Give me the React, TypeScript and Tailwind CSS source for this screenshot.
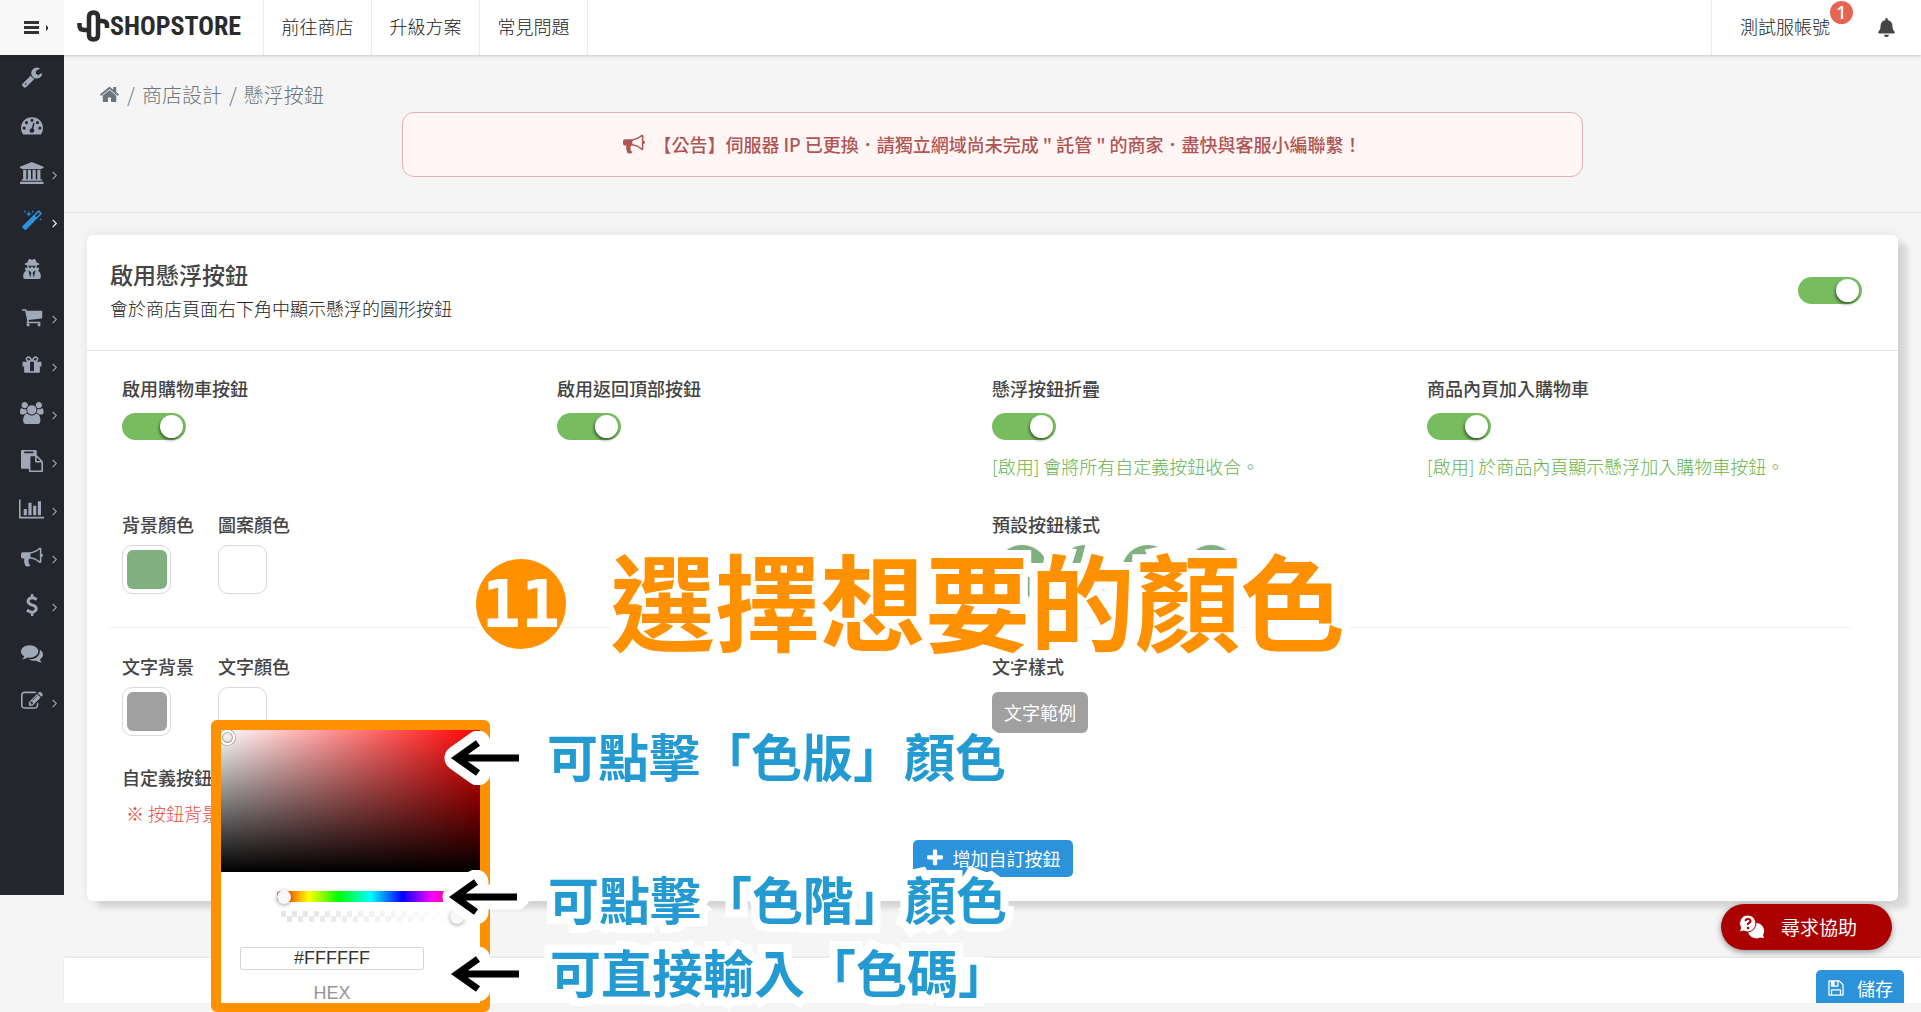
import type { CSSProperties, ReactNode } from "react";
import { FaBell, FaUserSecret } from "react-icons/fa";

/* ---------- icons ---------- */

type Glyph = { d: string; box?: string };

const glyphs: Record<string, Glyph> = {
  home: {
    d: "M1472 992v480q0 26-19 45t-45 19h-384v-384h-256v384h-384q-26 0-45-19t-19-45v-480q0-1 .5-3t.5-3l575-474 575 474q1 2 1 6zm223-69l-62 74q-8 9-21 11h-3q-13 0-21-7l-692-577-692 577q-12 8-24 7-13-2-21-11l-62-74q-8-10-7-23.5t11-21.5l719-599q32-26 76-26t76 26l244 204v-195q0-14 9-23t23-9h192q14 0 23 9t9 23v408l219 182q10 8 11 21.5t-7 23.5z",
  },
  wrench: {
    d: "M448 1472q0-26-19-45t-45-19-45 19-19 45 19 45 45 19 45-19 19-45zm644-420l-682 682q-37 37-90 37-52 0-91-37l-106-108q-38-36-38-90 0-53 38-91l681-681q39 98 114.5 173.5t173.5 114.5zm634-435q0 39-23 106-47 134-164.5 217.5t-258.5 83.5q-185 0-316.5-131.5t-131.5-316.5 131.5-316.5 316.5-131.5q58 0 121.5 16.5t107.5 46.5q16 11 16 28t-16 28l-293 169v224l193 107q5-3 79-48.5t135.5-81 70.5-35.5q15 0 23.5 10t8.5 25z",
  },
  gauge: {
    d: "M384 1152q0-53-37.5-90.5t-90.5-37.5-90.5 37.5-37.5 90.5 37.5 90.5 90.5 37.5 90.5-37.5 37.5-90.5zm192-448q0-53-37.5-90.5t-90.5-37.5-90.5 37.5-37.5 90.5 37.5 90.5 90.5 37.5 90.5-37.5 37.5-90.5zm428 481l101-382q6-26-7.5-48.5t-38.5-29.5-48 6.5-30 39.5l-101 382q-60 5-107 43.5t-63 98.5q-20 77 20 146t117 89 146-20 89-117q16-60-6-117t-72-91zm660-33q0-53-37.5-90.5t-90.5-37.5-90.5 37.5-37.5 90.5 37.5 90.5 90.5 37.5 90.5-37.5 37.5-90.5zm-640-640q0-53-37.5-90.5t-90.5-37.5-90.5 37.5-37.5 90.5 37.5 90.5 90.5 37.5 90.5-37.5 37.5-90.5zm448 192q0-53-37.5-90.5t-90.5-37.5-90.5 37.5-37.5 90.5 37.5 90.5 90.5 37.5 90.5-37.5 37.5-90.5zm320 448q0 261-141 483-19 29-54 29h-1402q-35 0-54-29-141-221-141-483 0-182 71-348t191-286 286-191 348-71 348 71 286 191 191 286 71 348z",
  },
  bank: {
    box: "0 0 1920 1792",
    d: "M960 0l960 384v128h-128q0 26-20.5 45t-48.5 19h-1526q-28 0-48.5-19t-20.5-45h-128v-128zm-704 640h256v768h128v-768h256v768h128v-768h256v768h128v-768h256v768h59q28 0 48.5 19t20.5 45v64h-1664v-64q0-26 20.5-45t48.5-19h59v-768zm1595 960q28 0 48.5 19t20.5 45v128h-1920v-128q0-26 20.5-45t48.5-19h1782z",
  },
  magic: {
    d: "M1254 581l293-293-107-107-293 293zm447-293q0 27-18 45l-1286 1286q-18 18-45 18t-45-18l-198-198q-18-18-18-45t18-45l1286-1286q18-18 45-18t45 18l198 198q18 18 18 45zm-1351-190l98 30-98 30-30 98-30-98-98-30 98-30 30-98zm350 162l196 60-196 60-60 196-60-196-196-60 196-60 60-196zm930 478l98 30-98 30-30 98-30-98-98-30 98-30 30-98zm-640-640l98 30-98 30-30 98-30-98-98-30 98-30 30-98z",
  },
  cart: {
    d: "M704 1536q0 52-38 90t-90 38-90-38-38-90 38-90 90-38 90 38 38 90zm896 0q0 52-38 90t-90 38-90-38-38-90 38-90 90-38 90 38 38 90zm128-1088v512q0 24-16.5 42.5t-40.5 21.5l-1044 122q13 60 13 70 0 16-24 64h920q26 0 45 19t19 45-19 45-45 19h-1024q-26 0-45-19t-19-45q0-11 8-31.5t16-36 21.5-40 15.5-29.5l-177-823h-204q-26 0-45-19t-19-45 19-45 45-19h256q16 0 28.5 6.5t19.5 15.5 13 24.5 8 26 5.5 29.5 4.5 26h1201q26 0 45 19t19 45z",
  },
  gift: {
    d: "M1056 1356v-716h-320v716q0 25 18 38.5t46 13.5h192q28 0 46-13.5t18-38.5zm-456-844h195l-126-161q-26-31-69-31-40 0-68 28t-28 68 28 68 68 28zm688-96q0-40-28-68t-68-28q-43 0-69 31l-125 161h194q40 0 68-28t28-68zm376 256v320q0 14-9 23t-23 9h-96v416q0 40-28 68t-68 28h-1088q-40 0-68-28t-28-68v-416h-96q-14 0-23-9t-9-23v-320q0-14 9-23t23-9h440q-93 0-158.5-65.5t-65.5-158.5 65.5-158.5 158.5-65.5q107 0 168 77l128 165 128-165q61-77 168-77 93 0 158.5 65.5t65.5 158.5-65.5 158.5-158.5 65.5h440q14 0 23 9t9 23z",
  },
  users: {
    box: "-64 0 1920 1792",
    d: "M529 896q-162 5-265 128h-134q-82 0-138-40.5t-56-118.5q0-353 124-353 6 0 43.5 21t97.5 42.5 119 21.5q67 0 133-23-5 37-5 66 0 139 81 256zm1071 637q0 120-73 189.5t-194 69.5h-874q-121 0-194-69.5t-73-189.5q0-53 3.5-103.5t14-109 26.5-108.5 43-97.5 62-81 85.5-53.5 111.5-20q10 0 43 21.5t73 48 107 48 135 21.5 135-21.5 107-48 73-48 43-21.5q61 0 111.5 20t85.5 53.5 62 81 43 97.5 26.5 108.5 14 109 3.5 103.5zm-1024-1277q0 106-75 181t-181 75-181-75-75-181 75-181 181-75 181 75 75 181zm704 384q0 159-112.5 271.5t-271.5 112.5-271.5-112.5-112.5-271.5 112.5-271.5 271.5-112.5 271.5 112.5 112.5 271.5zm576 225q0 78-56 118.5t-138 40.5h-134q-103-123-265-128 81-117 81-256 0-29-5-66 66 23 133 23 59 0 119-21.5t97.5-42.5 43.5-21q124 0 124 353zm-128-609q0 106-75 181t-181 75-181-75-75-181 75-181 181-75 181 75 75 181z",
  },
  paste: {
    d: "M768 1664h896v-640h-416q-40 0-68-28t-28-68v-416h-384v1152zm256-1440v-64q0-13-9.5-22.5t-22.5-9.5h-704q-13 0-22.5 9.5t-9.5 22.5v64q0 13 9.5 22.5t22.5 9.5h704q13 0 22.5-9.5t9.5-22.5zm256 672h299l-299-299v299zm512 128v672q0 40-28 68t-68 28h-960q-40 0-68-28t-28-68v-160h-544q-40 0-68-28t-28-68v-1344q0-40 28-68t68-28h1088q40 0 68 28t28 68v328q21 13 36 28l408 408q28 28 48 76t20 88z",
  },
  chart: {
    box: "0 0 2048 1792",
    d: "M640 896v512h-256v-512h256zm384-512v1024h-256v-1024h256zm1024 1152v128h-2048v-1536h128v1408h1920zm-640-896v768h-256v-768h256zm384-384v1152h-256v-1152h256z",
  },
  bullhorn: {
    d: "M1664 640q53 0 90.5 37.5t37.5 90.5-37.5 90.5-90.5 37.5v384q0 52-38 90t-90 38q-417-347-812-380-58 19-91 66t-31 100.5 40 92.5q-20 33-23 65.5t6 58 33.5 55 48 50 61.5 50.5q-29 58-111.5 83t-168.5 11.5-132-55.5q-7-23-29.5-87.5t-32-94.5-23-89-15-101 3.5-98.5 22-110.5h-122q-66 0-113-47t-47-113v-192q0-66 47-113t113-47h480q435 0 896-384 52 0 90 38t38 90v384zm-128 604v-954q-394 302-768 343v270q377 42 768 341z",
  },
  dollar: {
    d: "M1362 1185q0 153-99.5 263.5t-258.5 136.5v175q0 14-9 23t-23 9h-135q-13 0-22.5-9.5t-9.5-22.5v-175q-66-9-127.5-31t-101.5-44.5-74-48-46.5-37.5-17.5-18q-17-21-2-41l103-135q7-10 23-12 15-2 24 9l2 2q113 99 243 125 37 8 74 8 81 0 142.5-43t61.5-122q0-28-15-53t-33.5-42-58.5-37.5-66-32-80-32.5q-39-16-61.5-25t-61.5-26.5-62.5-31-56.5-35.5-53.5-42.5-43.5-49-35.5-58-21-66.5-8.5-78q0-138 98-242t255-134v-180q0-13 9.5-22.5t22.5-9.5h135q14 0 23 9t9 23v176q57 6 110.5 23t87 33.5 63.5 37.5 39 29 15 14q17 18 5 38l-81 146q-8 15-23 16-14 3-27-7-3-3-14.5-12t-39-26.5-58.5-32-74.5-26-85.5-11.5q-95 0-155 43t-60 111q0 26 8.5 48t29.5 41.5 39.5 33 56 31 60.5 27 70 27.5q53 20 81 31.5t76 35 75.5 42.5 62 50 53 63.5 31.5 76.5 13 94z",
  },
  comments: {
    d: "M1408 768q0 139-94 257t-256.5 186.5-353.5 68.5q-86 0-176-16-124 88-278 128-36 9-86 16h-3q-11 0-20.5-8t-11.5-21q-1-3-1-6.5t.5-6.5 2-6l2.5-5 3.5-5.5 4-5 4.5-5 4-4.5q5-6 23-25t26-29.5 22.5-29 25-38.5 20.5-44q-124-72-195-177t-71-224q0-139 94-257t256.5-186.5 353.5-68.5 353.5 68.5 256.5 186.5 94 257zm384 256q0 120-71 224.5t-195 176.5q10 24 20.5 44t25 38.5 22.5 29 26 29.5 23 25q1 1 4 4.5t4.5 5 4 5 3.5 5.5l2.5 5 2 6 .5 6.5-1 6.5q-3 14-13 22t-22 7q-50-7-86-16-154-40-278-128-90 16-176 16-271 0-472-132 58 4 88 4 161 0 309-45t264-129q125-92 192-212t67-254q0-77-23-152 129 71 204 178t75 230z",
  },
  edit: {
    d: "M888 1184l116-116-152-152-116 116v56h96v96h56zm440-720q-16-16-33 1l-350 350q-17 17-1 33t33-1l350-350q17-17 1-33zm80 594v190q0 119-84.5 203.5t-203.5 84.5h-832q-119 0-203.5-84.5t-84.5-203.5v-832q0-119 84.5-203.5t203.5-84.5h832q63 0 117 25 15 7 18 23 3 17-9 29l-49 49q-14 14-32 8-23-6-45-6h-832q-66 0-113 47t-47 113v832q0 66 47 113t113 47h832q66 0 113-47t47-113v-126q0-13 9-22l64-64q15-15 35-7t20 29zm-96-738l288 288-672 672h-288v-288zm444 132l-92 92-288-288 92-92q28-28 68-28t68 28l152 152q28 28 28 68t-28 68z",
  },
  plus: {
    d: "M1600 736v192q0 40-28 68t-68 28h-416v416q0 40-28 68t-68 28h-192q-40 0-68-28t-28-68v-416h-416q-40 0-68-28t-28-68v-192q0-40 28-68t68-28h416v-416q0-40 28-68t68-28h192q40 0 68 28t28 68v416h416q40 0 68 28t28 68z",
  },
  save: {
    d: "M512 1536h768v-384h-768v384zm896 0h128v-896q0-14-10-38.5t-20-34.5l-281-281q-10-10-34-20t-39-10v416q0 40-28 68t-68 28h-576q-40 0-68-28t-28-68v-416h-128v1280h128v-416q0-40 28-68t68-28h832q40 0 68 28t28 68v416zm-384-928v-320q0-13-9.5-22.5t-22.5-9.5h-192q-13 0-22.5 9.5t-9.5 22.5v320q0 13 9.5 22.5t22.5 9.5h192q13 0 22.5-9.5t9.5-22.5zm640 32v928q0 40-28 68t-68 28h-1344q-40 0-68-28t-28-68v-1344q0-40 28-68t68-28h928q40 0 88 20t76 48l280 280q28 28 48 76t20 88z",
  },
};

function Icon({ name, className }: { name: string; className: string }) {
  const g = glyphs[name];
  return (
    <svg viewBox={g.box ?? "0 0 1792 1792"} className={className} fill="currentColor" aria-hidden="true">
      <path d={g.d} />
    </svg>
  );
}

/* ---------- top bar ---------- */

function TopBar() {
  return (
    <header className="relative z-10 flex h-[55px] bg-white shadow-[0_1px_3px_rgba(0,0,0,0.2)]">
      <button type="button" aria-label="選單" className="flex w-16 items-center justify-center bg-[#f8f8f8]">
        <svg viewBox="0 0 24 16" className="ml-2 h-4 w-6" fill="#333" aria-hidden="true">
          <path d="M0 1h15v3H0zM0 6h15v3H0zM0 11h15v3H0z" />
          <path d="M22 5l3 3-3 3z" />
        </svg>
      </button>
      <a href="#" aria-label="SHOPSTORE" className="flex w-[199px] items-center pb-1 pl-3 text-[#2b2b2b]">
        <svg viewBox="0 0 34 34" className="h-[34px] w-[34px]" fill="none" stroke="currentColor" strokeWidth="4.500" aria-hidden="true">
          <path d="M3.500 14v2.500q0 4.500 5 4.500h4.500V8q0-4.500 4.500-4.500T22 8v18q0 4.500-4.500 4.500T13 26v-3" />
          <path d="M22 12h4q5 0 5 4.500V19" />
        </svg>
        <span className="font-['Liberation_Sans_Narrow','Roboto_Condensed','Liberation_Sans',sans-serif] text-[26px] leading-[30px] font-bold">
          SHOPSTORE
        </span>
      </a>
      <nav className="flex border-l border-[#ececec] text-lg text-[#222]">
        {["前往商店", "升級方案", "常見問題"].map((t) => (
          <a key={t} href="#" className="flex w-[108px] items-center justify-center border-r border-[#ececec] pb-1">
            {t}
          </a>
        ))}
      </nav>
      <div className="ml-auto flex items-center border-l border-[#ececec] pr-[26px] pl-7 text-[#222]">
        <a href="#" className="relative pb-1 text-lg">
          測試服帳號
          <span className="absolute -top-[11px] left-[90px] flex h-[23px] w-[23px] items-center justify-center rounded-full bg-[#e66454] font-['Noto_Sans',sans-serif] text-lg leading-none font-medium text-white">
            1
          </span>
        </a>
        <button type="button" aria-label="通知" className="ml-12 text-[#444]">
          <FaBell className="h-[19px] w-[17px]" />
        </button>
      </div>
    </header>
  );
}

/* ---------- sidebar ---------- */

const menu: { icon: string; label: string; more?: boolean; active?: boolean }[] = [
  { icon: "wrench", label: "設定" },
  { icon: "gauge", label: "儀表板" },
  { icon: "bank", label: "商店", more: true },
  { icon: "magic", label: "商店設計", more: true, active: true },
  { icon: "secret", label: "追蹤" },
  { icon: "cart", label: "訂單", more: true },
  { icon: "gift", label: "商品", more: true },
  { icon: "users", label: "會員", more: true },
  { icon: "paste", label: "頁面", more: true },
  { icon: "chart", label: "報表", more: true },
  { icon: "bullhorn", label: "行銷", more: true },
  { icon: "dollar", label: "金流", more: true },
  { icon: "comments", label: "訊息" },
  { icon: "edit", label: "文章", more: true },
];

function Sidebar() {
  return (
    <aside className="h-[840px] w-16 shrink-0 bg-[#23262d]">
      {menu.map((m) => (
        <a
          key={m.icon}
          href="#"
          aria-label={m.label}
          className={`relative flex h-12 items-center justify-center pb-1 ${m.active ? "text-[#2a93da]" : "text-[#a0a8b8]"}`}
        >
          {m.icon === "secret" ? <FaUserSecret className="h-5 w-5" /> : <Icon name={m.icon} className="h-[22px]" />}
          {m.more && (
            <svg
              viewBox="0 0 6 10"
              className={`absolute top-5 left-[51px] h-[9px] w-[7px] ${m.active ? "text-white" : "text-[#a0a8b8]"}`}
              fill="none"
              stroke="currentColor"
              strokeWidth="1.2"
              aria-hidden="true"
            >
              <path d="M1 1l4 4-4 4" />
            </svg>
          )}
        </a>
      ))}
    </aside>
  );
}

/* ---------- form pieces ---------- */

function Toggle({ label }: { label: string }) {
  return (
    <input
      type="checkbox"
      role="switch"
      aria-label={label}
      defaultChecked
      className="relative block h-[27px] w-16 appearance-none rounded-full bg-[#77bd5f] before:absolute before:top-[2px] before:right-[3px] before:h-[23px] before:w-[23px] before:rounded-full before:bg-white before:shadow-[-1px_2px_3px_rgba(0,0,0,0.5)]"
    />
  );
}

function Label({ children }: { children: ReactNode }) {
  return <div className="text-lg leading-[27px] font-medium text-[#444]">{children}</div>;
}

function ToggleField({ label, help }: { label: string; help?: string }) {
  return (
    <div className="px-3">
      <Label>{label}</Label>
      <div className="mt-[11px]">
        <Toggle label={label} />
      </div>
      {help && <p className="mt-[13px] text-lg leading-[27px] text-[#65b44a]">{help}</p>}
    </div>
  );
}

function Swatch({ label, fill }: { label: string; fill: string }) {
  return (
    <div className="w-24">
      <Label>{label}</Label>
      <button
        type="button"
        aria-label={label}
        className="mt-[7px] flex h-[49px] w-[49px] items-center justify-center rounded-[10px] border border-[#d9d9d9] bg-white"
      >
        <span className={`h-[39px] w-10 rounded-md ${fill}`} />
      </button>
    </div>
  );
}

function Settings() {
  return (
    <section className="mx-[23px] mt-[22px] rounded-md bg-white shadow-[0_0_10px_rgba(0,0,0,0.08),10px_8px_5px_#dcdcdc]">
      <div className="flex h-[116px] items-center justify-between border-b border-[#e2e2e2] pr-9 pb-[5px] pl-[23px]">
        <div>
          <h1 className="text-[23px] leading-8 font-medium text-[#444]">啟用懸浮按鈕</h1>
          <p className="mt-[5px] text-lg leading-[27px] text-[#222]">會於商店頁面右下角中顯示懸浮的圓形按鈕</p>
        </div>
        <Toggle label="啟用懸浮按鈕" />
      </div>
      <div className="pt-6 pr-12 pb-6 pl-[23px]">
        <div className="grid grid-cols-4">
          <ToggleField label="啟用購物車按鈕" />
          <ToggleField label="啟用返回頂部按鈕" />
          <ToggleField label="懸浮按鈕折疊" help="[啟用] 會將所有自定義按鈕收合。" />
          <ToggleField label="商品內頁加入購物車" help="[啟用] 於商品內頁顯示懸浮加入購物車按鈕。" />
        </div>
        <div className="mt-[31px] grid grid-cols-2">
          <div className="flex px-3">
            <Swatch label="背景顏色" fill="bg-[#80b080]" />
            <Swatch label="圖案顏色" fill="bg-white" />
          </div>
          <div className="h-[83px] px-3">
            <Label>預設按鈕樣式</Label>
            <div className="mt-[7px] flex gap-[11px] pl-1">
              {["樣式一", "樣式二", "樣式三", "樣式四"].map((s) => (
                <button
                  key={s}
                  type="button"
                  aria-label={s}
                  className="h-[52px] w-[52px] rounded-full bg-[#80b080] shadow-[0_1px_3px_rgba(0,0,0,0.3)]"
                />
              ))}
            </div>
          </div>
        </div>
        <hr className="mt-[33px] border-[#f0f0f0]" />
        <div className="mt-[25px] grid grid-cols-2">
          <div className="flex px-3">
            <Swatch label="文字背景" fill="bg-[#a0a0a0]" />
            <Swatch label="文字顏色" fill="bg-white" />
          </div>
          <div className="px-3">
            <Label>文字樣式</Label>
            <button type="button" className="mt-3 h-[41px] w-24 rounded-md bg-[#a0a0a0] pb-0.5 text-lg font-normal text-white">
              文字範例
            </button>
          </div>
        </div>
        <div className="mt-7 px-3">
          <Label>自定義按鈕設定</Label>
          <p className="mt-[9px] pl-1 text-lg leading-[27px] text-[#e84c3d]">※ 按鈕背景</p>
        </div>
      </div>
      <div className="-mt-[11px] flex justify-center pb-6">
        <button
          type="button"
          className="flex h-[37px] w-40 items-center justify-center gap-2 rounded-[5px] bg-[#2a93da] pb-0.5 text-lg font-normal text-white"
        >
          <Icon name="plus" className="h-5" />
          增加自訂按鈕
        </button>
      </div>
    </section>
  );
}

function Notice() {
  return (
    <div className="mx-auto mt-[3px] flex h-[65px] w-[64%] items-center justify-center gap-2 rounded-xl border border-[#e2b0b2] bg-[#fff6f5] pb-0.5 text-lg font-medium text-[#b05553]">
      <Icon name="bullhorn" className="h-[22px]" />
      <span>【公告】伺服器 IP 已更換．請獨立網域尚未完成 " 託管 " 的商家．盡快與客服小編聯繫！</span>
    </div>
  );
}

function Content() {
  return (
    <main className="min-w-0 flex-1">
      <div className="h-[158px] border-b border-[#e2e2e2] px-1.5 pt-[25px]">
        <nav aria-label="breadcrumb" className="flex h-[29px] items-center gap-[7px] pl-[29px] text-xl text-[#6c757d]">
          <a href="#" aria-label="首頁">
            <Icon name="home" className="h-[21px]" />
          </a>
          <span>/</span>
          <a href="#">商店設計</a>
          <span>/</span>
          <span>懸浮按鈕</span>
        </nav>
        <Notice />
      </div>
      <Settings />
      <div className="mt-[57px] flex h-[45px] justify-end overflow-hidden bg-white pt-3 pr-[17px] shadow-[0_-1px_2px_rgba(0,0,0,0.08)]">
        <button
          type="button"
          className="flex h-[37px] w-[88px] items-center justify-center gap-3 rounded-[5px] bg-[#2a93da] pb-0.5 text-lg font-normal text-white"
        >
          <Icon name="save" className="h-[18px]" />
          儲存
        </button>
      </div>
    </main>
  );
}

/* ---------- colour picker popover ---------- */

const thumb =
  "appearance-none [&::-webkit-slider-thumb]:h-3.5 [&::-webkit-slider-thumb]:w-3.5 [&::-webkit-slider-thumb]:appearance-none [&::-webkit-slider-thumb]:rounded-full [&::-webkit-slider-thumb]:bg-[#f8f8f8] [&::-webkit-slider-thumb]:shadow-[0_1px_4px_rgba(0,0,0,0.37)]";

function ColorPicker() {
  return (
    <div className="absolute top-[720px] left-[211px] h-[292px] w-[279px] overflow-hidden rounded-md border-10 border-b-9 border-[#ff9100] bg-white">
      <div className="relative h-[142px] overflow-hidden bg-[linear-gradient(to_top,#000,transparent),linear-gradient(to_right,#fff,#f00)]">
        <span className="absolute top-0 -left-[1px] h-[15px] w-[15px] rounded-full border-2 border-white shadow-[0_0_0_1px_#aaa,inset_0_0_1px_1px_#999]" />
      </div>
      <div className="pt-[19px] pr-4 pl-14">
        <input
          type="range"
          aria-label="色相"
          defaultValue={0}
          className={`${thumb} block h-[11px] w-full rounded-sm bg-[linear-gradient(to_right,#f00_0%,#ff0_17%,#0f0_33%,#0ff_50%,#00f_67%,#f0f_83%,#f00_100%)]`}
        />
        <div className="mx-1 mt-[9px] h-[11px] bg-[linear-gradient(to_right,transparent,#fff),conic-gradient(#fff_25%,#e4e4e4_0_50%,#fff_0_75%,#e4e4e4_0)] bg-[length:auto,11px_11px]">
          <input
            type="range"
            aria-label="透明度"
            defaultValue={100}
            className={`${thumb} -mx-1 block h-[11px] w-[calc(100%+8px)] bg-transparent`}
          />
        </div>
      </div>
      <div className="mt-[25px] ml-[19px] w-[184px] text-center font-['Liberation_Sans',sans-serif] text-lg">
        <input
          id="hex"
          defaultValue="#FFFFFF"
          className="block h-[23px] w-full rounded-xs border border-[#d5d5d5] text-center leading-5 text-[#333]"
        />
        <label htmlFor="hex" className="mt-3 block leading-[22px] text-[#969696]">
          HEX
        </label>
      </div>
    </div>
  );
}

/* ---------- tutorial annotations ---------- */

const arrowLine = "M76 20H14M35 5L14 20L35 35";

function Arrow({ className }: { className: string }) {
  return (
    <svg viewBox="0 0 90 54" className={`absolute h-[54px] w-[90px] ${className}`} fill="none" aria-hidden="true">
      <g transform="translate(1 7)">
        <path d={arrowLine} stroke="#fff" strokeWidth="25" strokeLinejoin="round" strokeLinecap="round" />
        <path d={arrowLine} stroke="#000" strokeWidth="7" />
      </g>
    </svg>
  );
}

const halo: CSSProperties = { paintOrder: "stroke fill", strokeLinejoin: "round" };

function Hint({ className, children }: { className: string; children: ReactNode }) {
  return (
    <p
      style={halo}
      className={`absolute text-[51px] leading-[60px] font-bold whitespace-nowrap text-[#239bd2] [-webkit-text-stroke:16px_#fff] ${className}`}
    >
      {children}
    </p>
  );
}

function Annotations() {
  return (
    <>
      <span className="absolute top-[559px] left-[476px] flex h-[90px] w-[90px] items-center justify-center rounded-full bg-[#ff9100] font-['DejaVu_Sans_Mono',monospace] text-[65px] leading-none font-bold text-white shadow-[0_0_0_4px_#fff]">
        11
      </span>
      <h2
        style={halo}
        className="absolute top-[552px] left-[610px] text-[105px] leading-[90px] font-bold whitespace-nowrap text-[#ff9100] [-webkit-text-stroke:16px_#fff]"
      >
        選擇想要的顏色
      </h2>
      <Arrow className="top-[731px] left-[442px]" />
      <Arrow className="top-[870px] left-[440px]" />
      <Arrow className="top-[947px] left-[442px]" />
      <Hint className="top-[725px] left-[547px]">可點擊「色版」顏色</Hint>
      <Hint className="top-[868px] left-[548px]">可點擊「色階」顏色</Hint>
      <Hint className="top-[941px] left-[550px]">可直接輸入「色碼」</Hint>
    </>
  );
}

function HelpButton() {
  return (
    <button
      type="button"
      className="absolute top-[904px] right-[29px] flex h-[46px] w-[171px] items-center gap-4 rounded-full bg-[#ab0000] pl-[18px] text-[19px] font-normal text-white shadow-[0_2px_6px_rgba(0,0,0,0.4)]"
    >
      <svg viewBox="0 0 26 24" className="h-6 w-[26px]" aria-hidden="true">
        <path d="M17 8a8 8 0 0 1 7 12l1 3-4-.5A8.500 8.500 0 0 1 9 17z" fill="#fff" />
        <path d="M9 0a8.500 8.500 0 1 1-4.500 16L0 17l1.800-4A8.500 8.500 0 0 1 9 0z" fill="#fff" stroke="#ab0000" strokeWidth="1" />
        <path d="M6.500 6q.3-2 2.500-2t2.500 2q0 1.300-1.500 2t-1 2" fill="none" stroke="#ab0000" strokeWidth="2" />
        <circle cx="9" cy="13" r="1.300" fill="#ab0000" />
      </svg>
      尋求協助
    </button>
  );
}

export default function App() {
  return (
    <div className="relative min-h-screen overflow-hidden bg-[#f5f5f5] font-['Noto_Sans_CJK_TC','Noto_Sans',sans-serif] font-light">
      <TopBar />
      <div className="flex items-start">
        <Sidebar />
        <Content />
      </div>
      <HelpButton />
      <ColorPicker />
      <Annotations />
    </div>
  );
}
